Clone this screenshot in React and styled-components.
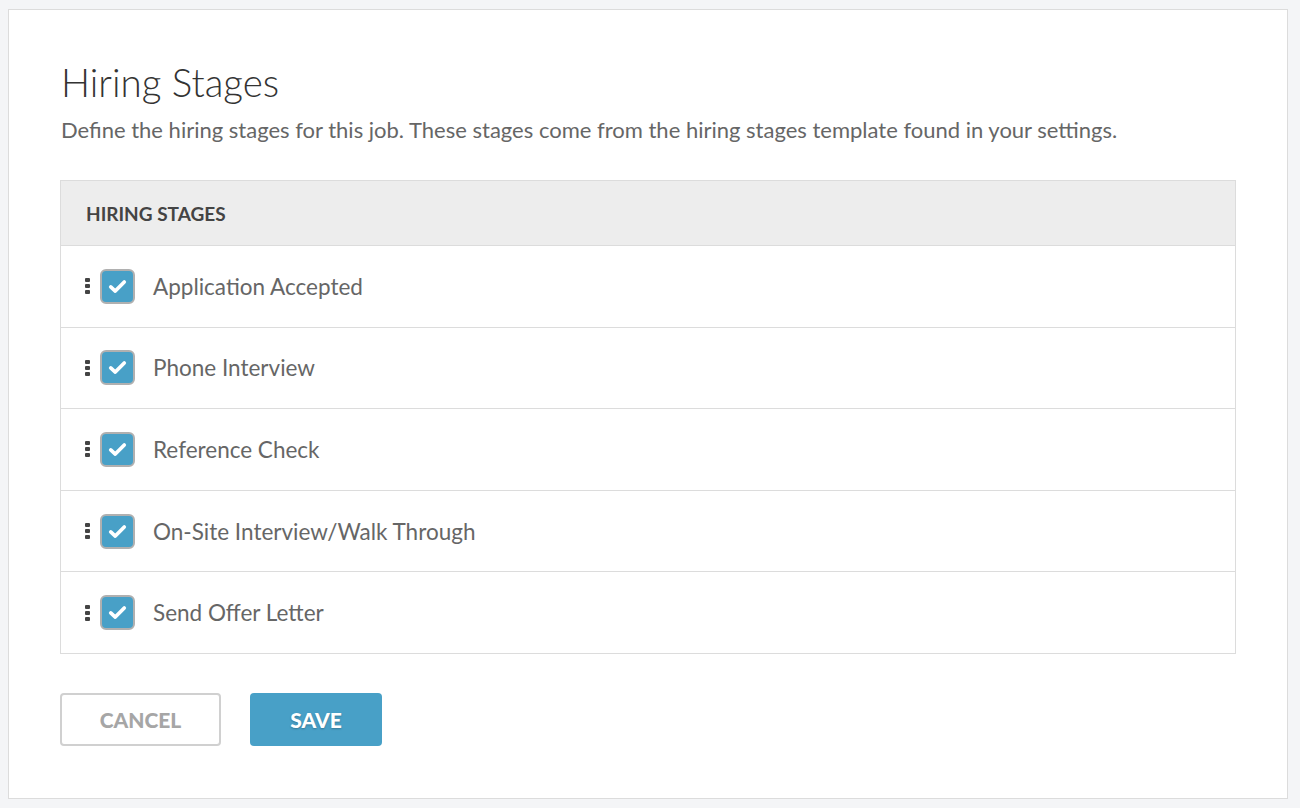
import React, { useState } from "react";
import styled, { createGlobalStyle } from "styled-components";

const GlobalStyle = createGlobalStyle`
  html, body {
    margin: 0;
    padding: 0;
    background: #f4f5f7;
    font-family: Lato, "Open Sans", sans-serif;
  }
  body {
    padding: 9px 12px 9px 8px;
  }
`;

const initialStages = [
  { id: 1, name: "Application Accepted", checked: true },
  { id: 2, name: "Phone Interview", checked: true },
  { id: 3, name: "Reference Check", checked: true },
  { id: 4, name: "On-Site Interview/Walk Through", checked: true },
  { id: 5, name: "Send Offer Letter", checked: true },
];

const HiringStages = () => {
  const [stages, setStages] = useState(initialStages);

  const toggle = (id) => {
    setStages(
      stages.map((s) => (s.id === id ? { ...s, checked: !s.checked } : s))
    );
  };

  return (
    <Card>
      <Title>Hiring Stages</Title>
      <Subtitle>
        Define the hiring stages for this job. These stages come from the
        hiring stages template found in your settings.
      </Subtitle>
      <Table>
        <TableHeader>Hiring Stages</TableHeader>
        {stages.map((stage) => (
          <Row key={stage.id}>
            <Handle>
              <span />
              <span />
              <span />
            </Handle>
            <CheckBox
              type="button"
              checked={stage.checked}
              onClick={() => toggle(stage.id)}
            >
              {stage.checked ? (
                <svg width="19" height="15" viewBox="0 0 18 14">
                  <path
                    d="M2.6 7.4 L6.9 11.3 L15.4 2.8"
                    fill="none"
                    stroke="#fff"
                    strokeWidth="3.5"
                    strokeLinecap="round"
                    strokeLinejoin="round"
                  />
                </svg>
              ) : null}
            </CheckBox>
            <StageName>{stage.name}</StageName>
          </Row>
        ))}
      </Table>
      <Actions>
        <Button>Cancel</Button>
        <Button primary>Save</Button>
      </Actions>
    </Card>
  );
};

const Card = styled.section`
  background: #fff;
  border: 1px solid #dcdcdc;
  min-height: 790px;
  box-sizing: border-box;
  padding: 50px 51px 0 51px;
`;

const Title = styled.h1`
  margin: 0 0 0 1px;
  font-family: Lato, sans-serif;
  font-weight: 300;
  font-size: 38.5px;
  line-height: 44px;
  color: #333;
`;

const Subtitle = styled.p`
  margin: 12px 0 0 1px;
  font-size: 22px;
  line-height: 28px;
  color: #666;
  white-space: nowrap;
`;

const Table = styled.div`
  margin-top: 36px;
  border: 1px solid #dcdcdc;
`;

const TableHeader = styled.div`
  background: #ededed;
  height: 64px;
  display: flex;
  align-items: center;
  padding-left: 25px;
  font-size: 19px;
  font-weight: 700;
  text-transform: uppercase;
  color: #444;
  border-bottom: 1px solid #dcdcdc;
`;

const Row = styled.div`
  height: 80.6px;
  display: flex;
  align-items: center;
  padding-left: 24px;
  border-bottom: 1px solid #dcdcdc;
  &:last-child {
    border-bottom: none;
  }
`;

const Handle = styled.div`
  display: flex;
  flex-direction: column;
  gap: 2px;
  margin-right: 10px;
  span {
    width: 5px;
    height: 4px;
    border-radius: 1px;
    background: #444;
  }
`;

const CheckBox = styled.button`
  width: 35px;
  height: 35px;
  box-sizing: border-box;
  border: 2px solid #b0b0b0;
  border-radius: 6px;
  background: ${(p) => (p.checked ? "#48a0c7" : "#fff")};
  display: flex;
  align-items: center;
  justify-content: center;
  padding: 0;
  cursor: pointer;
`;

const StageName = styled.span`
  margin-left: 18px;
  font-size: 22.5px;
  color: #666;
`;

const Actions = styled.div`
  display: flex;
  gap: 29px;
  margin-top: 39px;
`;

const Button = styled.button`
  height: 53px;
  min-width: ${(p) => (p.primary ? "132px" : "161px")};
  border-radius: 4px;
  border: ${(p) => (p.primary ? "none" : "2px solid #d0d0d0")};
  background: ${(p) => (p.primary ? "#48a0c7" : "#fff")};
  color: ${(p) => (p.primary ? "#fff" : "#a6a6a6")};
  font-family: Lato, sans-serif;
  font-size: 21px;
  font-weight: 900;
  text-transform: uppercase;
  text-shadow: ${(p) => (p.primary ? "0 1px 2px rgba(0,0,0,0.25)" : "none")};
  cursor: pointer;
`;

export default function App() {
  return (
    <>
      <GlobalStyle />
      <HiringStages />
    </>
  );
}
